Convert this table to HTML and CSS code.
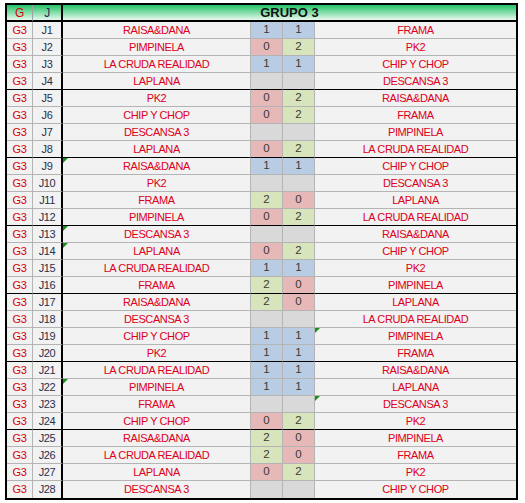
FILE: index.html
```html
<!DOCTYPE html>
<html lang="es">
<head>
<meta charset="utf-8">
<title>Grupo 3</title>
<link rel="stylesheet" href="styles.css">
</head>
<body>
<div class="sheet">
  <div class="hd g">G</div><div class="hd j">J</div><div class="hd title">GRUPO 3</div>

  <div class="c g">G3</div><div class="c j">J1</div><div class="c t1">RAISA&amp;DANA</div><div class="c s1 b">1</div><div class="c s2 b">1</div><div class="c t2">FRAMA</div>
  <div class="c g">G3</div><div class="c j">J2</div><div class="c t1">PIMPINELA</div><div class="c s1 r">0</div><div class="c s2 v">2</div><div class="c t2">PK2</div>
  <div class="c g">G3</div><div class="c j">J3</div><div class="c t1">LA CRUDA REALIDAD</div><div class="c s1 b">1</div><div class="c s2 b">1</div><div class="c t2">CHIP Y CHOP</div>
  <div class="c g e">G3</div><div class="c j e">J4</div><div class="c t1 e">LAPLANA</div><div class="c s1 n e"></div><div class="c s2 n e"></div><div class="c t2 e">DESCANSA 3</div>

  <div class="c g">G3</div><div class="c j">J5</div><div class="c t1">PK2</div><div class="c s1 r">0</div><div class="c s2 v">2</div><div class="c t2">RAISA&amp;DANA</div>
  <div class="c g">G3</div><div class="c j">J6</div><div class="c t1">CHIP Y CHOP</div><div class="c s1 r">0</div><div class="c s2 v">2</div><div class="c t2">FRAMA</div>
  <div class="c g">G3</div><div class="c j">J7</div><div class="c t1">DESCANSA 3</div><div class="c s1 n"></div><div class="c s2 n"></div><div class="c t2">PIMPINELA</div>
  <div class="c g e">G3</div><div class="c j e">J8</div><div class="c t1 e">LAPLANA</div><div class="c s1 r e">0</div><div class="c s2 v e">2</div><div class="c t2 e">LA CRUDA REALIDAD</div>

  <div class="c g">G3</div><div class="c j">J9</div><div class="c t1 m">RAISA&amp;DANA</div><div class="c s1 b">1</div><div class="c s2 b">1</div><div class="c t2">CHIP Y CHOP</div>
  <div class="c g">G3</div><div class="c j">J10</div><div class="c t1">PK2</div><div class="c s1 n"></div><div class="c s2 n"></div><div class="c t2">DESCANSA 3</div>
  <div class="c g">G3</div><div class="c j">J11</div><div class="c t1">FRAMA</div><div class="c s1 v">2</div><div class="c s2 r">0</div><div class="c t2">LAPLANA</div>
  <div class="c g e">G3</div><div class="c j e">J12</div><div class="c t1 e">PIMPINELA</div><div class="c s1 r e">0</div><div class="c s2 v e">2</div><div class="c t2 e">LA CRUDA REALIDAD</div>

  <div class="c g">G3</div><div class="c j">J13</div><div class="c t1 m">DESCANSA 3</div><div class="c s1 n"></div><div class="c s2 n"></div><div class="c t2">RAISA&amp;DANA</div>
  <div class="c g">G3</div><div class="c j">J14</div><div class="c t1 m">LAPLANA</div><div class="c s1 r">0</div><div class="c s2 v">2</div><div class="c t2">CHIP Y CHOP</div>
  <div class="c g">G3</div><div class="c j">J15</div><div class="c t1">LA CRUDA REALIDAD</div><div class="c s1 b">1</div><div class="c s2 b">1</div><div class="c t2">PK2</div>
  <div class="c g e">G3</div><div class="c j e">J16</div><div class="c t1 e">FRAMA</div><div class="c s1 v e">2</div><div class="c s2 r e">0</div><div class="c t2 e">PIMPINELA</div>

  <div class="c g">G3</div><div class="c j">J17</div><div class="c t1">RAISA&amp;DANA</div><div class="c s1 v">2</div><div class="c s2 r">0</div><div class="c t2">LAPLANA</div>
  <div class="c g">G3</div><div class="c j">J18</div><div class="c t1">DESCANSA 3</div><div class="c s1 n"></div><div class="c s2 n"></div><div class="c t2">LA CRUDA REALIDAD</div>
  <div class="c g">G3</div><div class="c j">J19</div><div class="c t1">CHIP Y CHOP</div><div class="c s1 b">1</div><div class="c s2 b">1</div><div class="c t2 m">PIMPINELA</div>
  <div class="c g e">G3</div><div class="c j e">J20</div><div class="c t1 e">PK2</div><div class="c s1 b e">1</div><div class="c s2 b e">1</div><div class="c t2 e">FRAMA</div>

  <div class="c g">G3</div><div class="c j">J21</div><div class="c t1">LA CRUDA REALIDAD</div><div class="c s1 b">1</div><div class="c s2 b">1</div><div class="c t2">RAISA&amp;DANA</div>
  <div class="c g">G3</div><div class="c j">J22</div><div class="c t1 m">PIMPINELA</div><div class="c s1 b">1</div><div class="c s2 b">1</div><div class="c t2">LAPLANA</div>
  <div class="c g">G3</div><div class="c j">J23</div><div class="c t1">FRAMA</div><div class="c s1 n"></div><div class="c s2 n"></div><div class="c t2 m">DESCANSA 3</div>
  <div class="c g e">G3</div><div class="c j e">J24</div><div class="c t1 e">CHIP Y CHOP</div><div class="c s1 r e">0</div><div class="c s2 v e">2</div><div class="c t2 e">PK2</div>

  <div class="c g">G3</div><div class="c j">J25</div><div class="c t1">RAISA&amp;DANA</div><div class="c s1 v">2</div><div class="c s2 r">0</div><div class="c t2">PIMPINELA</div>
  <div class="c g">G3</div><div class="c j">J26</div><div class="c t1">LA CRUDA REALIDAD</div><div class="c s1 v">2</div><div class="c s2 r">0</div><div class="c t2">FRAMA</div>
  <div class="c g">G3</div><div class="c j">J27</div><div class="c t1">LAPLANA</div><div class="c s1 r">0</div><div class="c s2 v">2</div><div class="c t2">PK2</div>
  <div class="c g last">G3</div><div class="c j last">J28</div><div class="c t1 last">DESCANSA 3</div><div class="c s1 n last"></div><div class="c s2 n last"></div><div class="c t2 last">CHIP Y CHOP</div>
</div>
</body>
</html>
```

FILE: styles.css
```css
html, body {
  margin: 0;
  padding: 0;
  background: #ffffff;
}

.sheet {
  margin: 3px 0 0 5px;
  width: 509px;
  border: 2px solid #000000;
  display: grid;
  grid-template-columns: 26px 30px 188px 32px 32px 201px;
  grid-auto-rows: 17px;
  font-family: "Liberation Sans", Arial, sans-serif;
  font-size: 11px;
  letter-spacing: -0.4px;
}

.hd {
  box-sizing: border-box;
  height: 17px;
  border-bottom: 2px solid #000000;
  background: linear-gradient(#22c266 0%, #8ee0af 55%, #eaf8ef 100%);
  display: flex;
  align-items: center;
  justify-content: center;
  line-height: 1;
}

.hd.g {
  color: #d40000;
  border-right: 1px solid #9aa59f;
  font-size: 12px;
}

.hd.j {
  color: #1f2a55;
  border-right: 2px solid #000000;
  font-size: 12px;
}

.hd.title {
  grid-column: 3 / span 4;
  color: #111111;
  font-weight: bold;
  font-size: 13px;
  letter-spacing: 0;
}

.c {
  position: relative;
  box-sizing: border-box;
  height: 17px;
  background: #f2f2f2;
  border-bottom: 1px solid #b4b4b4;
  display: flex;
  align-items: center;
  justify-content: center;
  line-height: 1;
  white-space: nowrap;
}

.c.e {
  border-bottom-color: #000000;
}

.c.last {
  border-bottom: none;
}

.c.g {
  color: #d40000;
  border-right: 1px solid #b4b4b4;
}

.c.j {
  color: #2b2f4a;
  border-right: 2px solid #000000;
}

.c.t1 {
  color: #dc0020;
  border-right: 1px solid #b4b4b4;
}

.c.t2 {
  color: #dc0020;
}

.c.s1, .c.s2 {
  color: #3a3a30;
  border-right: 1px solid #b4b4b4;
  letter-spacing: 0;
  font-size: 11.5px;
}

.c.b { background: #b8cce4; }
.c.r { background: #e6b8b7; }
.c.v { background: #d8e4bc; }
.c.n { background: #d9d9d9; }

.c.m::before {
  content: "";
  position: absolute;
  left: 0;
  top: 0;
  width: 0;
  height: 0;
  border-top: 5px solid #1a8f1a;
  border-right: 5px solid transparent;
}
```
